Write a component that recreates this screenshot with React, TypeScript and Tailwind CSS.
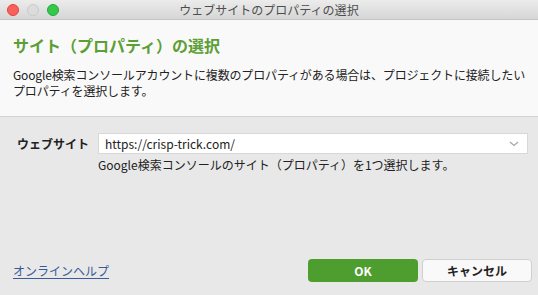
import React from 'react';

const font = { fontFamily: '"Noto Sans CJK JP", "Noto Sans", sans-serif' };

const App: React.FC = () => {
  return (
    <div className="w-[538px] h-[295px] flex flex-col bg-[#e8e8e8] overflow-hidden" style={font}>
      {/* Title bar */}
      <div className="h-[20px] flex items-center relative bg-gradient-to-b from-[#ececec] to-[#d6d6d6] border-b border-[#c4c4c4]">
        <div className="flex items-center gap-[8px] pl-[7px]">
          <span className="w-[12px] h-[12px] rounded-full bg-[#fc605c] border border-[#e0443e]"></span>
          <span className="w-[12px] h-[12px] rounded-full bg-[#dcdcdc] border border-[#cacaca]"></span>
          <span className="w-[12px] h-[12px] rounded-full bg-[#34c84a] border border-[#23a93a]"></span>
        </div>
        <div className="absolute inset-0 flex items-center justify-center text-[12px] text-[#4d4d4d]">
          ウェブサイトのプロパティの選択
        </div>
      </div>

      {/* Header */}
      <div className="h-[97px] bg-[#f9f9f9] border-b border-[#d4d4d4] pl-[13px] pt-[14px]">
        <h1 className="text-[16px] leading-[22px] font-bold text-[#5c9f35]">サイト（プロパティ）の選択</h1>
        <p className="mt-[11px] text-[12px] leading-[16px] text-[#222] whitespace-nowrap tracking-[-0.15px]">
          Google検索コンソールアカウントに複数のプロパティがある場合は、プロジェクトに接続したい
          <br />
          プロパティを選択します。
        </p>
      </div>

      {/* Body */}
      <div className="flex-1 flex flex-col px-[13px]">
        <div className="flex items-start mt-[16px]">
          <label className="w-[85px] pl-[4px] pt-[2px] text-[12px] leading-[18px] font-bold text-[#222]">ウェブサイト</label>
          <div className="flex-1 flex flex-col mr-[-3px]">
            <div className="h-[21px] bg-white border border-[#d8d8d8] flex items-center justify-between pl-[6px] pr-[8px]">
              <span className="text-[12px] text-[#222]">https://crisp-trick.com/</span>
              <svg width="10" height="6" viewBox="0 0 10 6">
                <path d="M1 1 L5 4.5 L9 1" fill="none" stroke="#a8a8a8" strokeWidth="1.3" />
              </svg>
            </div>
            <p className="mt-[3px] text-[12px] leading-[16px] text-[#222]">Google検索コンソールのサイト（プロパティ）を1つ選択します。</p>
          </div>
        </div>

        <div className="mt-auto mb-[13px] flex items-center justify-between">
          <a className="text-[12px] text-[#3a5a98] underline underline-offset-2">オンラインヘルプ</a>
          <div className="flex gap-[4px] mr-[-7px]">
            <button className="w-[110px] h-[23px] rounded-[4px] bg-[#4e9e2f] text-white text-[12px] font-bold">OK</button>
            <button className="w-[110px] h-[23px] rounded-[4px] bg-[#f9f9f9] border border-[#cfcfcf] text-[#222] text-[12px] font-bold">キャンセル</button>
          </div>
        </div>
      </div>
    </div>
  );
};

export default App;
